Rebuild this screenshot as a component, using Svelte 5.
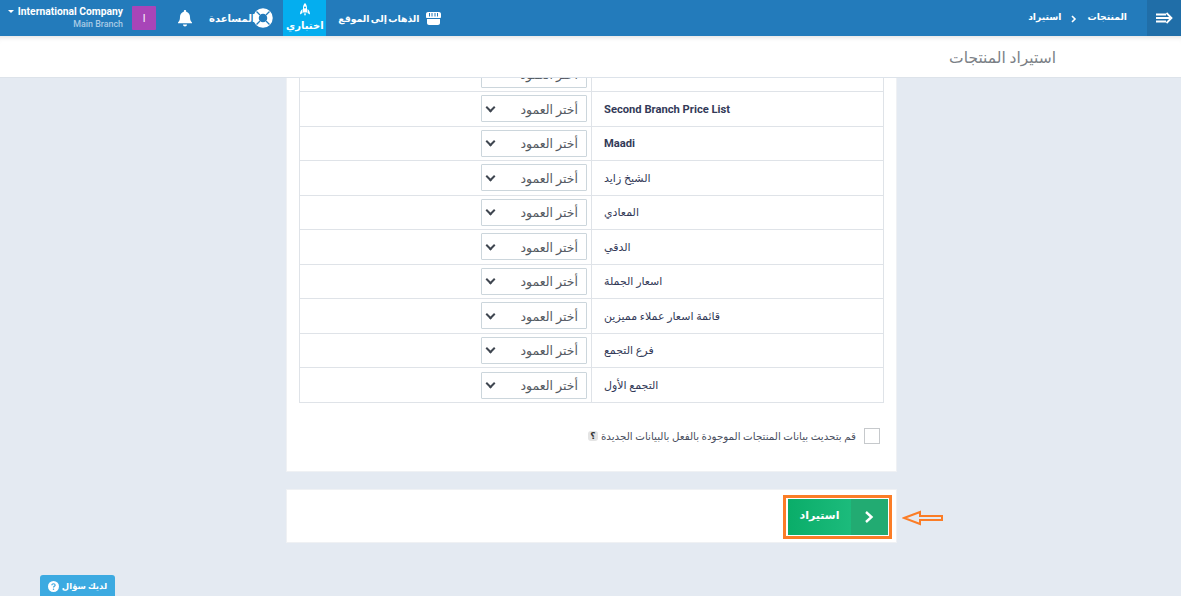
<script>
  const rows = [
    { label: 'Second Branch Price List', latin: true },
    { label: 'Maadi', latin: true },
    { label: 'الشيخ زايد' },
    { label: 'المعادي' },
    { label: 'الدقي' },
    { label: 'اسعار الجملة' },
    { label: 'قائمة اسعار عملاء مميزين' },
    { label: 'فرع التجمع' },
    { label: 'التجمع الأول' }
  ];
</script>

<div class="page">
  <header class="topbar">
    <div class="left">
      <div class="company">
        <div class="co-name"><span class="caret"></span>International Company</div>
        <div class="co-branch">Main Branch</div>
      </div>
      <div class="avatar">I</div>
      <svg class="bell" width="18" height="18" viewBox="0 0 18 18"><path fill="#fff" d="M9 1c.7 0 1.200.5 1.200 1.200v.5c2.500.6 3.800 2.700 3.800 5.300 0 3 .8 4.300 2 5.500v.7H2v-.7c1.200-1.200 2-2.500 2-5.500 0-2.600 1.300-4.700 3.800-5.300v-.5C7.800 1.500 8.300 1 9 1zM7 15.500h4c0 1.100-.9 2-2 2s-2-.9-2-2z"/></svg>
      <div class="nav-item help">
        <svg width="20" height="20" viewBox="0 0 20 20"><circle cx="10" cy="10" r="7" fill="none" stroke="#fff" stroke-width="5.500"/><path stroke="#237bbb" stroke-width="1.300" d="M3.500 3.500l3.500 3.500M16.500 3.500L13 7M3.500 16.500L7 13M16.500 16.500L13 13"/></svg>
        <span>المساعدة</span>
      </div>
      <div class="test">
        <svg width="10" height="13" viewBox="0 0 10 13"><path fill="#fff" fill-rule="evenodd" d="M5 0c1.400 1.300 2 3 2 5v4.500H3V5c0-2 .6-3.700 2-5zm0 3.500a1 1 0 100 2 1 1 0 000-2zM2.500 6v4L0 11.500c0-2.500.8-4.300 2.500-5.500zm5 0C9.200 7.200 10 9 10 11.500L7.500 10zM3.800 10.500h2.400L5 13z"/></svg>
        <span>اختباري</span>
      </div>
      <div class="nav-item site">
        <svg width="15" height="13" viewBox="0 0 15 13"><path fill="#fff" d="M2 0h11c1 0 2 .8 2 2v3c0 .6-.5 1-1 1H1c-.5 0-1-.4-1-1V2C0 .8 1 0 2 0zM1 7h13v4c0 1.100-.9 2-2 2H3c-1.100 0-2-.9-2-2z"/><path stroke="#237bbb" d="M3.500 1v3.500M6 1v3.500M9 1v3.500M11.500 1v3.500"/></svg>
        <span>الذهاب إلى الموقع</span>
      </div>
    </div>
    <div class="right">
      <div class="crumbs">
        <span>استيراد</span>
        <svg width="6" height="8" viewBox="0 0 6 8"><path d="M1 1l3 3-3 3" fill="none" stroke="#fff" stroke-width="1.600"/></svg>
        <span>المنتجات</span>
      </div>
      <div class="toggle">
        <svg width="17" height="12" viewBox="0 0 17 12"><path d="M0 2.500h10M0 6h14M0 9.500h10M10.500 1l5 5-5 5" fill="none" stroke="#fff" stroke-width="1.800"/></svg>
      </div>
    </div>
  </header>

  <div class="subbar"><h1>استيراد المنتجات</h1></div>

  <main class="content">
    <section class="panel">
      <div class="table">
        <div class="row cut">
          <div class="cell-select"><div class="select"><span class="chev"></span><span>أختر العمود</span></div></div>
          <div class="cell-label"></div>
        </div>
        {#each rows as row}
          <div class="row">
            <div class="cell-select">
              <div class="select"><span class="chev"></span><span>أختر العمود</span></div>
            </div>
            <div class="cell-label" class:latin={row.latin}>{row.label}</div>
          </div>
        {/each}
      </div>
      <div class="check-line">
        <span class="hint">؟</span>
        <span class="check-text">قم بتحديث بيانات المنتجات الموجودة بالفعل بالبيانات الجديدة</span>
        <span class="checkbox"></span>
      </div>
    </section>

    <section class="actions">
      <div class="btn-wrap">
        <div class="btn">
          <span class="btn-label">استيراد</span>
          <span class="btn-icon">
            <svg width="9" height="12" viewBox="0 0 9 12"><path d="M1 1l5.500 5L1 11" fill="none" stroke="#fff" stroke-width="2.400"/></svg>
          </span>
        </div>
      </div>
      <svg class="arrow" width="42" height="16" viewBox="0 0 42 16"><path d="M2 8l16-6v4h22v4H18v4z" fill="none" stroke="#fb7d27" stroke-width="2"/></svg>
    </section>

    <div class="question">
      <svg width="11" height="11" viewBox="0 0 12 12"><circle cx="6" cy="6" r="6" fill="#fff"/><path d="M4.200 4.700C4.200 3.600 5 3 6 3s1.800.6 1.800 1.500C7.800 5.800 6 5.800 6 7.200" fill="none" stroke="#3caae1" stroke-width="1.300"/><circle cx="6" cy="9" r=".8" fill="#3caae1"/></svg>
      <span>لديك سؤال</span>
    </div>
  </main>
</div>

<style>
  :global(body) {
    margin: 0;
    background: #e4eaf2;
    font-family: Roboto, "DejaVu Sans", sans-serif;
  }
  .page {
    height: 596px;
    overflow: hidden;
    display: flex;
    flex-direction: column;
  }
  .topbar {
    height: 36px;
    flex: none;
    background: #237bbb;
    display: flex;
    justify-content: space-between;
    color: #fff;
    font-size: 10px;
    font-weight: 700;
  }
  .left, .right { display: flex; align-items: center; }
  .company { margin-left: 7px; width: 116px; text-align: right; line-height: 12px; margin-top: -1px; }
  .co-name { font-size: 10.300px; white-space: nowrap; }
  .caret {
    display: inline-block;
    border: 3px solid transparent;
    border-top: 3px solid #fff;
    border-bottom: 0;
    margin-right: 4px;
    vertical-align: 2px;
  }
  .co-branch { color: #a9cbe6; font-size: 8.900px; font-weight: 500; }
  .avatar {
    width: 24px;
    height: 24px;
    margin-left: 9px;
    background: #a845b8;
    border-radius: 1px;
    display: flex;
    align-items: center;
    justify-content: center;
    font-size: 10px;
    font-weight: 400;
  }
  .bell { margin-left: 20px; }
  .nav-item { display: flex; align-items: center; white-space: nowrap; flex-direction: row-reverse; }
  .help { margin-left: 15px; margin-right: -3px; }
  .help svg { margin-left: -2px; }
  .test {
    margin-left: 13px;
    width: 43px;
    height: 36px;
    background: #04aeef;
    display: flex;
    flex-direction: column;
    align-items: center;
    justify-content: flex-start;
    font-size: 10px;
    font-weight: 700;
    padding-top: 3px;
    box-sizing: border-box;
    line-height: 14px;
  }
  .test svg { margin-bottom: 3px; }
  .site { margin-left: 12px; gap: 6px; font-size: 9.300px; word-spacing: -1px; }
  .crumbs { display: flex; align-items: center; gap: 10px; margin-right: 20px; margin-top: -4px; font-size: 9.200px; }
  .crumbs svg { margin-top: 6px; }
  .toggle {
    width: 34px;
    height: 36px;
    background: #206ea8;
    display: flex;
    align-items: center;
    justify-content: center;
  }
  .subbar {
    height: 42px;
    flex: none;
    background: #fff;
    box-shadow: inset 0 6px 6px -6px rgba(0, 0, 0, .18);
    border-bottom: 1px solid #dde3ea;
    box-sizing: border-box;
    display: flex;
    justify-content: flex-end;
    align-items: center;
    padding-right: 125px;
    padding-top: 2px;
    position: relative;
    z-index: 1;
  }
  h1 { margin: 0; font-size: 15.500px; font-weight: 400; color: #7b7f86; }
  .content {
    width: 611px;
    margin-left: 286px;
    position: relative;
  }
  .panel {
    background: #fff;
    border: 1px solid #eff1f4;
    border-top: 0;
    height: 394px;
    box-sizing: border-box;
    padding: 0 12px;
    overflow: hidden;
  }
  .table {
    margin-top: -20.500px;
    border: 1px solid #dfe3e8;
    border-top: 0;
  }
  .row {
    display: grid;
    grid-template-columns: 292px 1fr;
    height: 34.500px;
    box-sizing: border-box;
    border-bottom: 1px solid #dfe3e8;
  }
  .row:last-child { border-bottom: 0; height: 34px; }
  .cell-select {
    border-right: 1px solid #dfe3e8;
    display: flex;
    justify-content: flex-end;
    align-items: center;
    padding: 0 4px 0 0;
  }
  .select {
    width: 106px;
    height: 27px;
    box-sizing: border-box;
    border: 1px solid #ccd6dc;
    border-radius: 1px;
    display: flex;
    justify-content: space-between;
    align-items: center;
    padding: 1px 8px 0 2px;
    font-size: 12.500px;
    color: #555a62;
  }
  .chev {
    width: 5px;
    height: 5px;
    margin: -4px 0 0 3px;
    border-right: 2px solid #3f4650;
    border-bottom: 2px solid #3f4650;
    transform: rotate(45deg);
  }
  .cell-label {
    padding: 1px 0 0 12px;
    display: flex;
    align-items: center;
    direction: rtl;
    justify-content: flex-end;
    font-size: 11px;
    font-weight: 500;
    color: #333a58;
  }
  .cell-label.latin { font-weight: 700; font-size: 11.200px; }
  .check-line {
    display: flex;
    justify-content: flex-end;
    align-items: center;
    margin-top: 24px;
    padding-right: 4px;
    height: 18px;
    font-size: 10.300px;
    color: #4a4f60;
  }
  .hint {
    width: 10px;
    height: 10px;
    border-radius: 3px;
    background: #e4e4e4;
    font-size: 9px;
    font-weight: 700;
    line-height: 10px;
    text-align: center;
    margin-right: 3px;
    color: #333;
  }
  .checkbox {
    width: 16px;
    height: 16px;
    box-sizing: border-box;
    border: 1px solid #c6c9cc;
    margin-left: 8px;
  }
  .actions {
    position: relative;
    margin-top: 17px;
    height: 54px;
    background: #fff;
    border: 1px solid #eff1f4;
    box-sizing: border-box;
    display: flex;
    justify-content: flex-end;
    align-items: center;
    padding-right: 4px;
  }
  .btn-wrap { border: 3px solid #fb7d27; padding: 1px 1px 1px 2px; display: flex; margin-top: 1px; }
  .btn { display: flex; width: 100px; height: 36px; background: #11b06f; color: #fff; font-size: 11px; font-weight: 700; }
  .btn-label { flex: 1; display: flex; align-items: center; justify-content: center; padding-bottom: 2px; background: linear-gradient(90deg, #0aad69, #1cbb7c); }
  .btn-icon { width: 37px; background: #22ab72; display: flex; align-items: center; justify-content: center; }
  .arrow { position: absolute; left: 615px; top: 20px; }
  .question {
    position: absolute;
    left: -246px;
    top: 497px;
    width: 75px;
    height: 30px;
    background: #3caae1;
    border-radius: 3px;
    color: #fff;
    font-size: 8.500px;
    font-weight: 700;
    display: flex;
    justify-content: center;
    gap: 3px;
    padding-top: 6px;
    box-sizing: border-box;
  }
</style>
